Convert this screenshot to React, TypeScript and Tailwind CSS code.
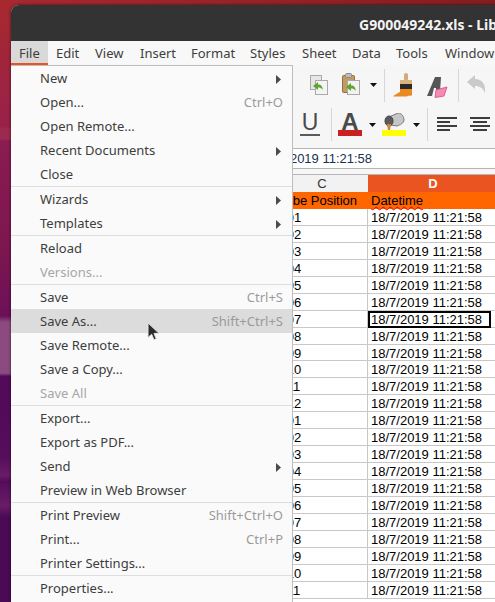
const menuGroups = [
  [
    { label: "New", sub: true },
    { label: "Open...", key: "Ctrl+O" },
    { label: "Open Remote..." },
    { label: "Recent Documents", sub: true },
    { label: "Close" },
  ],
  [
    { label: "Wizards", sub: true },
    { label: "Templates", sub: true },
  ],
  [{ label: "Reload" }, { label: "Versions...", off: true }],
  [
    { label: "Save", key: "Ctrl+S" },
    { label: "Save As...", key: "Shift+Ctrl+S", active: true },
    { label: "Save Remote..." },
    { label: "Save a Copy..." },
    { label: "Save All", off: true },
  ],
  [
    { label: "Export..." },
    { label: "Export as PDF..." },
    { label: "Send", sub: true },
    { label: "Preview in Web Browser" },
  ],
  [
    { label: "Print Preview", key: "Shift+Ctrl+O" },
    { label: "Print...", key: "Ctrl+P" },
    { label: "Printer Settings..." },
  ],
  [{ label: "Properties..." }],
];

const menuBar = [
  { label: "File", w: "w-[37px]" },
  { label: "Edit", w: "w-[39px]" },
  { label: "View", w: "w-[45px]" },
  { label: "Insert", w: "w-[51px]" },
  { label: "Format", w: "w-[59px]" },
  { label: "Styles", w: "w-[52px]" },
  { label: "Sheet", w: "w-[50px]" },
  { label: "Data", w: "w-[44px]" },
  { label: "Tools", w: "w-[49px]" },
  { label: "Window", w: "w-[60px]" },
];

const tubes = [
  "A01", "A02", "A03", "A04", "A05", "A06", "A07", "A08", "A09", "A10", "A11", "A12",
  "B01", "B02", "B03", "B04", "B05", "B06", "B07", "B08", "B09", "B10", "B11",
];

function Caret({ className = "" }: { className?: string }) {
  return (
    <svg width="7" height="4" viewBox="0 0 7 4" className={`shrink-0 ${className}`}>
      <path d="M0 0h7L3.5 4z" fill="#111" />
    </svg>
  );
}

function Sep({ className = "" }: { className?: string }) {
  return <span className={`h-[33px] w-px shrink-0 bg-[#d6d6d6] ${className}`} />;
}

function CloneIcon() {
  return (
    <svg width="18" height="20" viewBox="0 0 18 20" className="mt-[10px] shrink-0">
      <rect x="0.5" y="0.5" width="11" height="14" fill="#e6e6e6" stroke="#a9a9a9" />
      <rect x="5.5" y="5.5" width="12" height="14" fill="#f4f4f4" stroke="#a9a9a9" />
      <path d="M3 11l5-4v2.5c3 0 5 2 4.5 5.5-1-2-2.5-2.500-4.500-2.500V15z" fill="#5fa52d" />
    </svg>
  );
}

function PasteIcon() {
  return (
    <svg width="18" height="22" viewBox="0 0 18 22" className="mt-2 shrink-0">
      <rect x="0.5" y="2.500" width="12" height="17" rx="1" fill="#c39a62" stroke="#93713f" />
      <rect x="3.500" y="0.500" width="6" height="4" rx="1" fill="#bdbdbd" stroke="#8b8b8b" />
      <rect x="5.500" y="7.500" width="12" height="14" fill="#f2f2f2" stroke="#a9a9a9" />
      <path d="M4 14l5-4v2.500c3 0 5 2 4.500 5.500-1-2-2.500-2.500-4.500-2.500V18z" fill="#5fa52d" />
    </svg>
  );
}

function BrushIcon() {
  return (
    <svg width="22" height="24" viewBox="0 0 22 24" className="mt-2 shrink-0">
      <rect x="11" y="0" width="4" height="8" rx="2" fill="#d3a978" />
      <path d="M7 7h12v5H7z" fill="#d8b47e" />
      <rect x="7" y="11" width="12" height="5" fill="#2a2a2a" />
      <path d="M7 16h12v4H7z" fill="#ec8a1c" />
      <path d="M0 23.500c2-2 5-3.500 7-4.500h12v3c-1 1.500-3 0-5 1.500z" fill="#e88a24" />
    </svg>
  );
}

function EraserIcon() {
  return (
    <svg width="21" height="21" viewBox="0 0 21 21" className="mt-[12px] shrink-0">
      <path d="M0 19L8 0h6l-1 15H9l0-4H7l-2 8z" fill="#565656" />
      <path d="M9 13l11-3-3 9-9 1.500z" fill="#f58bb3" stroke="#e25c92" />
    </svg>
  );
}

function UndoIcon() {
  return (
    <svg width="19" height="18" viewBox="0 0 19 18" className="mt-[10px] shrink-0">
      <path d="M0 7l8-7v4c7 0 11 5 10 14-2-5-5-7-10-7v3z" fill="#cacaca" />
    </svg>
  );
}

function AlignIcon({ center }: { center?: boolean }) {
  const rows = center
    ? [[0, 20], [3, 14], [0, 20], [3, 14]]
    : [[0, 20], [0, 13], [0, 20], [0, 13]];
  return (
    <svg width="20" height="14" viewBox="0 0 20 14" className="mt-[11px] shrink-0">
      {rows.map(([x, w], i) => (
        <rect key={i} x={x} y={i * 4} width={w} height="2" fill="#3d3d3d" />
      ))}
    </svg>
  );
}

function BucketIcon() {
  return (
    <svg width="22" height="17" viewBox="0 0 22 17">
      <path d="M6 4l9-4c4 0 6 4 6 7s-4 5-7 6l-7-1z" fill="#c6c6c6" stroke="#7a7a7a" />
      <ellipse cx="6" cy="8" rx="4" ry="5" fill="#5a5a5a" stroke="#444" />
      <path d="M4 11h4l-1 6H5z" fill="#d9802a" />
    </svg>
  );
}

function Pointer() {
  return (
    <svg width="13" height="20" viewBox="0 0 14 22" className="absolute left-[147px] top-[322px]">
      <path d="M1 1v16l4-3.500 2.500 6 2.500-1-2.500-6H13z" fill="#2b2b2b" stroke="#e8e8e8" strokeWidth="1" />
    </svg>
  );
}

function FileMenu() {
  return (
    <div className="absolute left-[11px] top-[65px] w-[282px] h-[537px] bg-[#fafafa] border-t border-r border-[#bdbdbd] font-['Noto_Sans',sans-serif] text-[13px] text-[#3d3d3d]">
      {menuGroups.map((group, i) => (
        <div key={i} className={i > 0 ? "border-t border-[#dedede]" : ""}>
          {group.map((item) => (
            <div
              key={item.label}
              className={`flex h-6 items-center justify-between pl-[29px] pr-[9px] pt-[2px] ${item.active ? "bg-[#dcdcdc]" : ""} ${item.off ? "text-[#a6a6a6]" : ""}`}
            >
              <span>{item.label}</span>
              {item.key && <span className="text-[#9a9a9a]">{item.key}</span>}
              {item.sub && (
                <svg width="5" height="9" viewBox="0 0 5 9" className="mr-[2px]">
                  <path d="M0 0l5 4.500L0 9z" fill="#4a4a4a" />
                </svg>
              )}
            </div>
          ))}
        </div>
      ))}
    </div>
  );
}

export default function App() {
  return (
    <div className="relative w-[495px] h-[602px] overflow-hidden bg-[linear-gradient(90deg,rgba(0,0,0,0)_0%,rgba(50,0,0,0.3)_100%),linear-gradient(180deg,#a8292e_0%,#98214a_21%,#9c2a50_21.5%,#9c2a50_23%,#8a1c50_23.5%,#7c1650_42%,#6b1058_52.500%,#8b4a80_53.500%,#8b4a80_62%,#520a58_62.500%,#560e5c_76%,#6a1c66_79%,#540c5a_80%,#6a1c66_84%,#4a0a54_86%,#4a0a54_100%)]">
      <div className="ml-[11px] mt-[5px] h-[597px] w-[560px] overflow-hidden rounded-tl-[8px] bg-[#f6f6f6] flex flex-col shadow-[0_0_3px_rgba(0,0,0,0.6)]">
        <div className="h-[36px] shrink-0 bg-[#333333] pl-[348px] pt-[11px] font-['Noto_Sans',sans-serif] text-[14px] leading-[18px] font-bold text-[#f2f2f2] whitespace-nowrap">
          G900049242.xls - LibreOffice Calc
        </div>

        <div className="flex h-6 shrink-0 bg-[#f8f8f8] font-['Noto_Sans',sans-serif] text-[13px] text-[#3d3d3d]">
          {menuBar.map((m, i) => (
            <div
              key={m.label}
              className={`flex items-center pl-2 ${m.w} ${i === 0 ? "bg-[#d9d9d9] border-b-2 border-[#e95420] pt-1" : "pt-[2px]"}`}
            >
              {m.label}
            </div>
          ))}
        </div>

        <div className="flex h-[41px] shrink-0 items-start pl-[299px]">
          <CloneIcon />
          <span className="w-[14px] shrink-0" />
          <PasteIcon />
          <span className="w-[10px] shrink-0" />
          <Caret className="mt-[18px]" />
          <span className="w-[7px] shrink-0" />
          <Sep className="mt-1" />
          <span className="w-[8px] shrink-0" />
          <BrushIcon />
          <span className="w-[12px] shrink-0" />
          <EraserIcon />
          <span className="w-[10px] shrink-0" />
          <Sep className="mt-1" />
          <span className="w-[8px] shrink-0" />
          <UndoIcon />
        </div>

        <div className="flex h-[42px] shrink-0 items-start pl-[289px]">
          <div className="mt-2 flex w-[20px] flex-col items-center">
            <span className="font-['Liberation_Sans',sans-serif] text-[23px] leading-[17px] text-[#4a4a4a]">U</span>
            <span className="mt-[3px] h-[2px] w-[20px] bg-[#5a5a5a]" />
          </div>
          <span className="w-[11px] shrink-0" />
          <Sep className="mt-[2px]" />
          <span className="w-[6px] shrink-0" />
          <div className="mt-[7px] flex w-[24px] flex-col items-center">
            <span className="font-['Liberation_Sans',sans-serif] text-[24px] font-bold leading-[17px] text-[#4a4a4a]">A</span>
            <span className="h-[6px] w-[24px] bg-[#c9211e]" />
          </div>
          <span className="w-[7px] shrink-0" />
          <Caret className="mt-[17px]" />
          <span className="w-[6px] shrink-0" />
          <div className="mt-[7px] flex w-[24px] flex-col items-center">
            <BucketIcon />
            <span className="h-[6px] w-[24px] bg-[#ffff00]" />
          </div>
          <span className="w-[7px] shrink-0" />
          <Caret className="mt-[17px]" />
          <span className="w-[7px] shrink-0" />
          <Sep className="mt-[2px]" />
          <span className="w-[9px] shrink-0" />
          <AlignIcon />
          <span className="w-[13px] shrink-0" />
          <AlignIcon center />
        </div>

        <div className="flex h-[21px] shrink-0 items-center border-y border-[#b5b5b5] bg-white pl-[250px] font-['Liberation_Sans',sans-serif] text-[13px] text-[#1c3050] whitespace-nowrap">
          18/7/2019 11:21:58
        </div>

        <div className="h-[5px] shrink-0 bg-[#f6f6f6]" />

        <div className="flex-1 border-t border-[#b5b5b5] bg-white pl-[265px] font-['Liberation_Sans',sans-serif] text-[13px] text-black">
          <div className="flex h-[17px] text-center text-[#333333] leading-[17px]">
            <div className="w-[92px] bg-[#f2f2f2]">C</div>
            <div className="w-[140px] bg-[#e95420] font-bold text-white">
              <span className="pr-[10px]">D</span>
            </div>
          </div>
          <div className="flex h-[17px] bg-[#ff6600] leading-[17px]">
            <div className="w-[92px] pl-[2px] whitespace-nowrap">Tube Position</div>
            <div className="pl-[3px] underline decoration-wavy decoration-[#e00000] decoration-1">Datetime</div>
          </div>
          {tubes.map((tube, i) => (
            <div key={tube} className="flex h-[16.95px] leading-[17px]">
              <div className="w-[92px] border-r border-b border-[#c8c8c8] pl-[2px] whitespace-nowrap">{tube}</div>
              <div
                className={`w-[123px] shrink-0 whitespace-nowrap ${i === 6 ? "border-2 border-black pl-[1px] leading-[13px]" : "border-b border-[#c8c8c8] pl-[3px]"}`}
              >
                18/7/2019 11:21:58
              </div>
              <div className="flex-1 border-b border-[#c8c8c8]" />
            </div>
          ))}
        </div>
      </div>

      <FileMenu />
      <Pointer />
    </div>
  );
}
